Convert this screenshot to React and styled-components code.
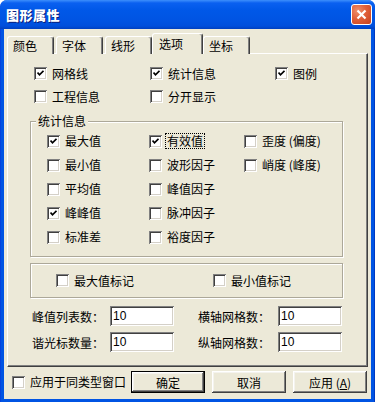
import React from "react";
import styled, { createGlobalStyle, css } from "styled-components";

const GlobalStyle = createGlobalStyle`
  html, body {
    margin: 0;
    padding: 0;
    background: #ffffff;
  }
  body {
    font-family: "Noto Sans CJK SC", "Liberation Sans", sans-serif;
    font-size: 12px;
    color: #000;
  }
`;

const face = "#ECE9D8";

const Window = styled.div`
  width: 375px;
  height: 402px;
  display: flex;
  flex-direction: column;
  background: linear-gradient(to right, #0831d9 0, #0054e3 1px, #0054e3 374px, #001ea0 375px);
  border-radius: 7px 7px 0 0;
  overflow: hidden;
`;

const TitleBar = styled.div`
  height: 29px;
  flex: none;
  display: flex;
  align-items: center;
  justify-content: space-between;
  padding: 0 3px 0 6px;
  box-sizing: border-box;
  background: linear-gradient(
    to bottom,
    #3d8ffc 0,
    #0a60f0 3px,
    #0058e8 10px,
    #0054e3 20px,
    #004fdc 26px,
    #0040c0 29px
  );
`;

const Title = styled.span`
  color: #fff;
  font-size: 13px;
  font-weight: 900;
  letter-spacing: 0.5px;
  text-shadow: 1px 1px 0 #0a1e7a;
`;

const CloseButton = styled.div`
  width: 21px;
  height: 21px;
  box-sizing: border-box;
  border: 1px solid #fff;
  border-radius: 3px;
  display: flex;
  align-items: center;
  justify-content: center;
  background: radial-gradient(circle at 30% 30%, #f0906c 0, #e0603a 45%, #c8401c 100%);
`;

const Content = styled.div`
  flex: 1;
  margin: 0 4px 3px 4px;
  padding: 4px 3px 0 3px;
  background: ${face};
  display: flex;
  flex-direction: column;
`;

const TabStrip = styled.div`
  height: 21px;
  display: flex;
  align-items: flex-end;
  position: relative;
  z-index: 1;
  margin-bottom: -1px;
`;

const Tab = styled.div`
  box-sizing: border-box;
  width: 47px;
  height: 18px;
  margin-right: 2px;
  padding-left: 5px;
  line-height: 17px;
  background: ${face};
  border: 1px solid;
  border-color: #fff #404040 transparent #fff;
  border-bottom: none;
  border-radius: 3px 3px 0 0;
  box-shadow: inset -1px 0 0 #808080;

  ${(p) =>
    p.$active &&
    css`
      width: 51px;
      height: 21px;
      margin: 0 0 0 -2px;
      padding-left: 6px;
      line-height: 19px;
    `}
`;

const Panel = styled.div`
  height: 314px;
  flex: none;
  box-sizing: border-box;
  border: 1px solid;
  border-color: #fff #404040 #404040 #fff;
  box-shadow: inset -1px -1px 0 #808080;
  padding: 8px 0 0 0;
`;

const TopGrid = styled.div`
  display: grid;
  grid-template-columns: 116px 125px auto;
  padding-left: 26px;
`;

const Item = styled.label`
  display: flex;
  align-items: center;
  height: ${(p) => p.$h || 23}px;
  white-space: nowrap;
`;

const Box = styled.span`
  width: 13px;
  height: 13px;
  flex: none;
  box-sizing: border-box;
  margin-right: 5px;
  background: #fff;
  box-shadow: inset 1px 1px 0 #808080, inset -1px -1px 0 #fff,
    inset 2px 2px 0 #404040, inset -2px -2px 0 #d4d0c8;
  display: flex;
  align-items: center;
  justify-content: center;
`;

const Text = styled.span`
  line-height: 14px;
  padding: 0 1px;
  margin-left: -1px;
  ${(p) =>
    p.$focus &&
    css`
      outline: 1px dotted #000;
      outline-offset: 0;
    `}
`;

const Group = styled.div`
  position: relative;
  width: 313px;
  box-sizing: border-box;
  margin: ${(p) => p.$mt}px 0 0 22px;
  border: 1px solid #aca899;
  box-shadow: inset 1px 1px 0 #fff, 1px 1px 0 #fff;
  padding: ${(p) => p.$pad};
`;

const Legend = styled.span`
  position: absolute;
  top: -9px;
  left: 5px;
  padding: 0 2px;
  line-height: 16px;
  background: ${face};
`;

const StatGrid = styled.div`
  display: grid;
  grid-template-columns: 102px 95px auto;
`;

const MarkRow = styled.div`
  display: grid;
  grid-template-columns: 157px auto;
`;

const Fields = styled.div`
  display: grid;
  grid-template-columns: 78px 64px 24px 80px 64px;
  row-gap: 6px;
  margin: 8px 0 0 24px;
  align-items: center;
`;

const FieldLabel = styled.span`
  grid-column: ${(p) => p.$col};
  white-space: nowrap;
`;

const Input = styled.div`
  grid-column: ${(p) => p.$col};
  height: 20px;
  box-sizing: border-box;
  padding: 3px 0 0 3px;
  background: #fff;
  font-family: "Liberation Sans", sans-serif;
  font-size: 12px;
  line-height: 14px;
  box-shadow: inset 1px 1px 0 #808080, inset -1px -1px 0 #fff,
    inset 2px 2px 0 #404040, inset -2px -2px 0 #d4d0c8;
`;

const Footer = styled.div`
  flex: 1;
  display: flex;
  align-items: center;
  padding: 0 1px 2px 5px;
`;

const Buttons = styled.div`
  margin-left: auto;
  display: flex;
  gap: 7px;
`;

const Button = styled.div`
  width: 74px;
  height: 22px;
  box-sizing: border-box;
  display: flex;
  align-items: center;
  justify-content: center;
  background: ${face};
  box-shadow: inset -1px -1px 0 #404040, inset 1px 1px 0 #fff,
    inset -2px -2px 0 #808080, inset 2px 2px 0 #f4f3ee;
  ${(p) =>
    p.$default &&
    css`
      border: 1px solid #000;
    `}
`;

const Check = () => (
  <svg width="7" height="7" viewBox="0 0 7 7">
    <path d="M0.5 2.5 L2.5 4.8 L6.5 0.8" fill="none" stroke="#000" strokeWidth="1.7" />
  </svg>
);

const CheckItem = ({ label, checked, focus, h }) => (
  <Item $h={h}>
    <Box>{checked && <Check />}</Box>
    <Text $focus={focus}>{label}</Text>
  </Item>
);

const tabs = ["颜色", "字体", "线形", "选项", "坐标"];

const stats = [
  ["最大值", true, "有效值", true, "歪度 (偏度)"],
  ["最小值", false, "波形因子", false, "峭度 (峰度)"],
  ["平均值", false, "峰值因子", false, null],
  ["峰峰值", true, "脉冲因子", false, null],
  ["标准差", false, "裕度因子", false, null],
];

export default function App() {
  return (
    <>
      <GlobalStyle />
      <Window>
        <TitleBar>
          <Title>图形属性</Title>
          <CloseButton>
            <svg width="11" height="11" viewBox="0 0 11 11">
              <path d="M1.5 1.5 L9.5 9.5 M9.5 1.5 L1.5 9.5" stroke="#fff" strokeWidth="2.2" />
            </svg>
          </CloseButton>
        </TitleBar>
        <Content>
          <TabStrip>
            {tabs.map((t) => (
              <Tab key={t} $active={t === "选项"}>
                {t}
              </Tab>
            ))}
          </TabStrip>
          <Panel>
            <TopGrid>
              <CheckItem label="网格线" checked />
              <CheckItem label="统计信息" checked />
              <CheckItem label="图例" checked />
              <CheckItem label="工程信息" />
              <CheckItem label="分开显示" />
            </TopGrid>
            <Group $mt={13} $pad="7px 0 7px 16px">
              <Legend>统计信息</Legend>
              <StatGrid>
                {stats.map(([a, ac, b, bc, c]) => (
                  <React.Fragment key={a}>
                    <CheckItem label={a} checked={ac} h={24} />
                    <CheckItem label={b} checked={bc} focus={b === "有效值"} h={24} />
                    {c ? <CheckItem label={c} h={24} /> : <span />}
                  </React.Fragment>
                ))}
              </StatGrid>
            </Group>
            <Group $mt={6} $pad="5px 0 5px 25px">
              <MarkRow>
                <CheckItem label="最大值标记" />
                <CheckItem label="最小值标记" />
              </MarkRow>
            </Group>
            <Fields>
              <FieldLabel $col={1}>峰值列表数：</FieldLabel>
              <Input $col={2}>10</Input>
              <FieldLabel $col={4}>横轴网格数：</FieldLabel>
              <Input $col={5}>10</Input>
              <FieldLabel $col={1}>谐光标数量：</FieldLabel>
              <Input $col={2}>10</Input>
              <FieldLabel $col={4}>纵轴网格数：</FieldLabel>
              <Input $col={5}>10</Input>
            </Fields>
          </Panel>
          <Footer>
            <CheckItem label="应用于同类型窗口" />
            <Buttons>
              <Button $default>确定</Button>
              <Button>取消</Button>
              <Button>
                应用 (<u>A</u>)
              </Button>
            </Buttons>
          </Footer>
        </Content>
      </Window>
    </>
  );
}
